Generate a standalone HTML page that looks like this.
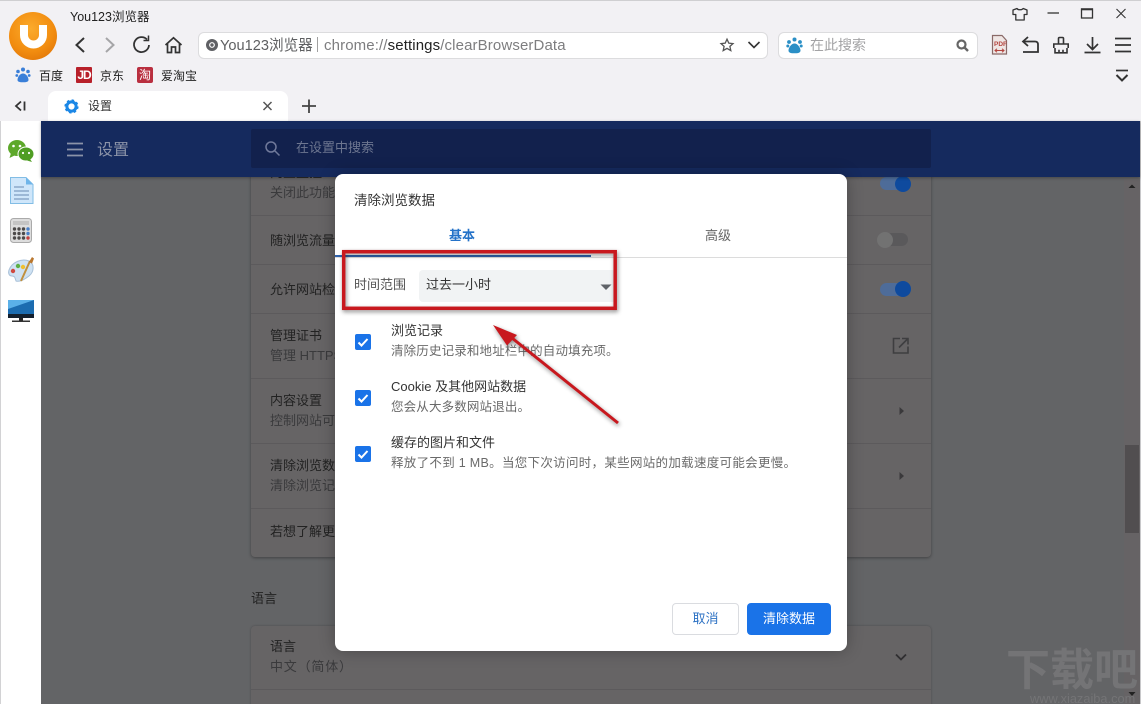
<!DOCTYPE html>
<html lang="zh"><head><meta charset="utf-8"><title>You123浏览器</title>
<style>
html,body{margin:0;padding:0;width:1141px;height:704px;overflow:hidden;background:#f2f1f4}
body{position:relative;font-family:"Liberation Sans","Noto Sans CJK SC",sans-serif;color:#222}
.a,.t{position:absolute}
.t{white-space:nowrap;line-height:16px}
svg{position:absolute;overflow:visible}
.g{color:#3a3a3c;font-size:13px}
.m{color:#222;font-size:13px}
.line{position:absolute;left:251px;width:680px;height:1px;background:#5c5a5c}
.d1{font-size:13px;color:#333}
.d2{font-size:12.5px;color:#6a6a6a}
.cb{position:absolute;left:355px;width:16px;height:16px;background:#1a73e8;border-radius:2px}
</style></head><body>
<div class="a" style="left:0;top:0;width:1141px;height:1px;background:#cfcfd1"></div>

<!-- logo -->
<div class="a" style="left:9px;top:12px;width:48px;height:48px;border-radius:50%;background:radial-gradient(circle at 45% 35%,#fbab2c 0%,#f28d10 55%,#d96b05 100%)"></div>
<svg style="left:0;top:0" width="60" height="60"><path d="M24 25v10a9.500 9.500 0 0 0 19 0V25" fill="none" stroke="#fff" stroke-width="8"/></svg>
<div class="t" style="left:70px;top:9px;font-size:12.500px;color:#222">You123浏览器</div>

<!-- nav icons -->
<svg style="left:0;top:0" width="200" height="60" fill="none" stroke-width="2">
<path d="M84 38l-7.500 7 7.500 7" stroke="#333"/>
<path d="M106 38l7.500 7-7.500 7" stroke="#a5a5a7"/>
<path d="M147 39.500a7.500 7.500 0 1 0 2 5.500" stroke="#333" stroke-width="1.800"/><path d="M148.500 35.500v5h-5" stroke="#333" stroke-width="1.500"/>
<path d="M165.500 45l8-7.200 8 7.200M167.500 43.500v9h4v-5.500h4v5.500h4v-9" stroke="#333" stroke-width="1.700"/>
</svg>

<!-- address bar -->
<div class="a" style="left:198px;top:32px;width:568px;height:25px;background:#fff;border:1px solid #dcdcde;border-radius:6px"></div>
<svg style="left:206px;top:39px" width="12" height="12"><circle cx="6" cy="6" r="6" fill="#5f6064"/><circle cx="6" cy="6" r="2.300" fill="#5f6064" stroke="#fff" stroke-width="1.200"/></svg>
<div class="t" style="left:220px;top:37px;font-size:14.600px;color:#5f6062;line-height:18px">You123浏览器</div>
<div class="a" style="left:317px;top:37px;width:1px;height:15px;background:#a0a0a0"></div>
<div class="t" style="left:324px;top:37px;font-size:15px;line-height:18px;letter-spacing:.12px;color:#7d7d7f">chrome://<span style="color:#222">settings</span>/clearBrowserData</div>
<svg style="left:0;top:0" width="780" height="60" fill="none">
<path d="M727 39.200l1.800 3.900 4.200.5-3.100 2.800.9 4.200-3.800-2.200-3.800 2.200.9-4.200-3.100-2.800 4.200-.5z" stroke="#555" stroke-width="1.300"/>
<path d="M748.500 42l5.500 5.500 5.500-5.500" stroke="#333" stroke-width="1.600"/>
</svg>

<!-- search box -->
<div class="a" style="left:778px;top:32px;width:198px;height:25px;background:#fff;border:1px solid #dcdcde;border-radius:6px"></div>
<svg style="left:786px;top:37px" width="17" height="17"><g fill="#2a8fc6"><circle cx="8.500" cy="2.500" r="2"/><circle cx="3" cy="5" r="1.900"/><circle cx="14" cy="5" r="1.900"/><circle cx="1.800" cy="9" r="1.500"/><circle cx="15.200" cy="9" r="1.500"/><path d="M8.500 6.500c3 0 6 4 6 7 0 2.500-3 2.800-6 2.800s-6-.3-6-2.800c0-3 3-7 6-7z"/></g></svg>
<div class="t" style="left:810px;top:37px;font-size:14px;color:#a3a3a5">在此搜索</div>
<svg style="left:0;top:0" width="1141" height="90" fill="none">
<circle cx="961.500" cy="44.500" r="4" stroke="#666" stroke-width="2.200"/><path d="M964.500 47.500l3.500 3.500" stroke="#666" stroke-width="2.400"/>
<!-- shirt -->
<path d="M1017 8.500c1 1.700 5 1.700 6.200 0l3.800 1.500v4.500l-2.800 0v5.500h-8.400v-5.500l-2.800 0V10z" stroke="#333" stroke-width="1.300" stroke-linejoin="round"/>
<path d="M1047.500 13h11.500" stroke="#333" stroke-width="1.300"/>
<rect x="1081.500" y="9" width="11" height="9" stroke="#333" stroke-width="1.300"/><path d="M1081 9.300h12" stroke="#333" stroke-width="2"/>
<path d="M1116.500 9l9 9M1125.500 9l-9 9" stroke="#333" stroke-width="1.100"/>
<!-- pdf -->
<path d="M992.500 35.500h9.500l4.500 5v13.500h-14z" fill="#efe6e4" stroke="#8a6a68" stroke-width="1.200"/>
<path d="M995 50.500h9M997 48.800l-2 1.700 2 1.700M1002 48.800l2 1.700-2 1.700" stroke="#b4453f" stroke-width="1"/>
<path d="M1023 41.500h12q3 0 3 3v7.500h-15" stroke="#333" stroke-width="1.800"/>
<path d="M1028 37l-5 4.500 5 4.500" stroke="#333" stroke-width="1.800"/>
<path d="M1058.500 44v-5.500q0-1 1-1h3q1 0 1 1V44M1053.800 48v-4h14.400v4M1055 48v4.800h12V48M1059 52.800v-3M1063 52.800v-3" stroke="#333" stroke-width="1.600"/>
<path d="M1092.500 37v12M1087 44l5.500 5.500 5.500-5.500M1084.500 52.500h16" stroke="#333" stroke-width="1.700"/>
<path d="M1115 38.500h16M1115 45h16M1115 51.500h16" stroke="#333" stroke-width="1.800"/>
<path d="M1116 70.500h12" stroke="#333" stroke-width="1.700"/><path d="M1116.500 75l5.500 5.500 5.500-5.500" stroke="#333" stroke-width="2"/>
</svg>
<div class="t" style="left:994px;top:41px;font-size:6.500px;line-height:7px;color:#b4453f;font-weight:bold">PDF</div>

<!-- bookmarks -->
<svg style="left:15px;top:67px" width="16" height="16"><g fill="#3a7fd8"><circle cx="8" cy="2.500" r="2"/><circle cx="3" cy="4.500" r="1.800"/><circle cx="13" cy="4.500" r="1.800"/><circle cx="1.800" cy="8.500" r="1.400"/><circle cx="14.200" cy="8.500" r="1.400"/><path d="M8 6.500c3 0 5.500 3.500 5.500 6.500 0 2-3 2.300-5.500 2.300S2.500 15 2.500 13c0-3 2.500-6.500 5.500-6.500z"/></g></svg>
<div class="t" style="left:39px;top:68px;font-size:12px">百度</div>
<div class="a" style="left:76px;top:67px;width:16px;height:16px;background:#b8202a;border-radius:1px;color:#fff;font-size:12px;font-weight:bold;line-height:16px;text-align:center;letter-spacing:-1px">JD</div>
<div class="t" style="left:100px;top:68px;font-size:12px">京东</div>
<div class="a" style="left:137px;top:67px;width:16px;height:16px;background:#b92f3f;border-radius:2px;color:#fff;font-size:12px;line-height:16px;text-align:center">淘</div>
<div class="t" style="left:161px;top:68px;font-size:12px">爱淘宝</div>

<!-- tab bar -->
<svg style="left:0;top:0" width="330" height="125" fill="none">
<path d="M21 101.500l-5 4.500 5 4.500" stroke="#333" stroke-width="1.800"/><path d="M24.500 101.500v9" stroke="#333" stroke-width="1.800"/>
</svg>
<div class="a" style="left:48px;top:91px;width:240px;height:30px;background:#fff;border-radius:8px 8px 0 0"></div>
<svg style="left:64px;top:99px" width="15" height="15"><circle cx="7.500" cy="7.500" r="4.600" fill="none" stroke="#1b87e6" stroke-width="3"/><circle cx="7.500" cy="7.500" r="6" fill="none" stroke="#1b87e6" stroke-width="2.200" stroke-dasharray="2.400 2.300"/></svg>
<div class="t" style="left:88px;top:98px;font-size:12px;color:#333">设置</div>
<svg style="left:0;top:0" width="330" height="125" fill="none">
<path d="M263.500 102l8 8M271.500 102l-8 8" stroke="#555" stroke-width="1.500"/>
<path d="M309 99.500v13.500M302 106h14" stroke="#444" stroke-width="1.800"/>
</svg>

<!-- sidebar -->
<div class="a" style="left:0;top:121px;width:41px;height:583px;background:#fff;border-left:1px solid #d2d2d4;box-sizing:border-box"></div>
<svg style="left:0;top:121px" width="41" height="210">
<ellipse cx="17" cy="27" rx="9" ry="8" fill="#5da82a"/><path d="M11 32l-1.500 5 6-3z" fill="#5da82a"/>
<circle cx="13.500" cy="25" r="1.300" fill="#fff"/><circle cx="20" cy="25" r="1.300" fill="#fff"/>
<ellipse cx="26" cy="33" rx="8" ry="7" fill="#4f9d23" stroke="#fff"/><path d="M30 38l2 3-5-1.500z" fill="#4f9d23"/>
<circle cx="23" cy="32" r="1.100" fill="#fff"/><circle cx="29" cy="32" r="1.100" fill="#fff"/>
<path d="M10.500 56.500h15.500l7 7v19H10.500z" fill="#cfe6fa" stroke="#82bde5"/><path d="M26 56.500v7h7z" fill="#6fb5ea"/>
<path d="M14 66h10M14 70h15M14 74h15M14 78h15" stroke="#7d9dc0" stroke-width="1.200"/>
<rect x="10.500" y="97.500" width="21" height="24" rx="3" fill="#ddd" stroke="#aaa"/>
<rect x="13" y="100" width="16" height="4" fill="#c4c4c4"/>
<g fill="#4c4a4a"><circle cx="14.500" cy="108" r="1.700"/><circle cx="19" cy="108" r="1.700"/><circle cx="23.500" cy="108" r="1.700"/><circle cx="14.500" cy="112.500" r="1.700"/><circle cx="19" cy="112.500" r="1.700"/><circle cx="23.500" cy="112.500" r="1.700"/><circle cx="14.500" cy="117" r="1.700"/><circle cx="19" cy="117" r="1.700"/><circle cx="23.500" cy="117" r="1.700"/></g>
<circle cx="28" cy="108" r="1.700" fill="#4a80c8"/><circle cx="28" cy="112.500" r="1.700" fill="#4a80c8"/><circle cx="28" cy="117" r="1.700" fill="#c43f3f"/>
<path d="M9 149c3-8 13-12 20-9 6 3 5 11 0 15-5 4-10 6-13 5-1-3-1-5-4-5s-4-3-3-6z" fill="#cfe2f3" stroke="#a8c0d8"/>
<circle cx="13" cy="150" r="2.200" fill="#d04a40"/><circle cx="18" cy="145" r="2.200" fill="#5cb045"/><circle cx="23" cy="146" r="2.200" fill="#f0c030"/>
<path d="M21 160l9-20" stroke="#c09040" stroke-width="2"/><path d="M29 141l3-5 2 1.500-2 5z" fill="#b9772f"/>
<path d="M8 179h26v15H8z" fill="#1c6cb0"/><path d="M8 179h26l-26 9z" fill="#5bb0e8"/><rect x="8" y="193" width="26" height="4" fill="#14202e"/>
<rect x="19" y="197" width="4" height="2.500" fill="#222"/><rect x="12" y="199.500" width="18" height="1.500" fill="#333"/>
</svg>

<!-- page -->
<div class="a" style="left:41px;top:121px;width:1100px;height:583px;background:#636466"></div>
<div class="a" style="left:1124px;top:178px;width:16px;height:526px;background:#666365"></div>
<div class="a" style="left:1125px;top:445px;width:14px;height:88px;background:#514e50"></div>
<div class="a" style="left:1140px;top:121px;width:1px;height:583px;background:#c8c8ca"></div>
<svg style="left:1125px;top:180px" width="14" height="524"><path d="M3.500 8l3.500-3.500L10.500 8z" fill="#222"/><path d="M3.500 512h7L7 516z" fill="#222"/></svg>

<!-- cards -->
<div class="a" style="left:251px;top:170px;width:680px;height:387px;background:#666465;border-radius:0 0 4px 4px;box-shadow:0 1px 3px rgba(0,0,0,.35)"></div>
<div class="a" style="left:251px;top:626px;width:680px;height:90px;background:#666465;border-radius:4px;box-shadow:0 0 2px rgba(0,0,0,.25)"></div>
<div class="line" style="top:215px"></div><div class="line" style="top:264px"></div><div class="line" style="top:313px"></div><div class="line" style="top:378px"></div><div class="line" style="top:443px"></div><div class="line" style="top:508px"></div><div class="line" style="top:689px"></div>
<div class="t m" style="left:270px;top:165px">内置监控</div>
<div class="t g" style="left:270px;top:185px">关闭此功能</div>
<div class="t m" style="left:270px;top:233px">随浏览流量</div>
<div class="t m" style="left:270px;top:282px">允许网站检</div>
<div class="t m" style="left:270px;top:328px">管理证书</div>
<div class="t g" style="left:270px;top:348px">管理 HTTPS</div>
<div class="t m" style="left:270px;top:393px">内容设置</div>
<div class="t g" style="left:270px;top:413px">控制网站可</div>
<div class="t m" style="left:270px;top:458px">清除浏览数</div>
<div class="t g" style="left:270px;top:478px">清除浏览记</div>
<div class="t m" style="left:270px;top:524px">若想了解更</div>
<div class="t m" style="left:251px;top:591px">语言</div>
<div class="t m" style="left:270px;top:639px">语言</div>
<div class="t g" style="left:270px;top:659px;letter-spacing:.8px">中文（简体）</div>

<!-- toggles -->
<div class="a" style="left:880px;top:177px;width:24px;height:13px;border-radius:7px;background:#4e6c99"></div>
<div class="a" style="left:895px;top:176px;width:16px;height:16px;border-radius:50%;background:#0e4a9e"></div>
<div class="a" style="left:885px;top:233px;width:23px;height:13px;border-radius:7px;background:#5a595b"></div>
<div class="a" style="left:877px;top:232px;width:16px;height:16px;border-radius:50%;background:#727272"></div>
<div class="a" style="left:880px;top:283px;width:24px;height:13px;border-radius:7px;background:#4e6c99"></div>
<div class="a" style="left:895px;top:281px;width:16px;height:16px;border-radius:50%;background:#0e4a9e"></div>
<svg style="left:890px;top:335px" width="22" height="150" fill="none">
<path d="M10 3.500H3.500V18H18V11.500M12 3.500h6v6M18 3.500l-9 9" stroke="#3e3e40" stroke-width="1.600"/>
<path d="M9.500 72l4.500 4-4.500 4z" fill="#3a393b"/><path d="M9.500 137l4.500 4-4.500 4z" fill="#3a393b"/>
</svg>
<svg style="left:890px;top:650px" width="22" height="14" fill="none"><path d="M6 4.500l5 5 5-5" stroke="#302f31" stroke-width="1.800"/></svg>

<!-- header -->
<div class="a" style="left:41px;top:121px;width:1099px;height:56px;background:#152a5e;box-shadow:0 1px 3px rgba(0,0,0,.3)"></div>
<div class="a" style="left:251px;top:129px;width:680px;height:39px;background:#12214d;border-radius:2px"></div>
<svg style="left:60px;top:135px" width="230" height="30" fill="none">
<path d="M7 8.500h16M7 14.500h16M7 20.500h16" stroke="#8b93a8" stroke-width="1.800"/>
<circle cx="211" cy="12" r="5" stroke="#70799a" stroke-width="1.500"/><path d="M215 16l4.500 4.500" stroke="#70799a" stroke-width="1.500"/>
</svg>
<div class="t" style="left:97px;top:142px;font-size:16px;line-height:18px;color:#8b93a8">设置</div>
<div class="t" style="left:296px;top:140px;font-size:13px;color:#6d7690">在设置中搜索</div>

<!-- dialog -->
<div class="a" style="left:335px;top:174px;width:512px;height:477px;background:#fff;border-radius:8px;box-shadow:0 0 16px rgba(0,0,0,.28)"></div>
<div class="t" style="left:354px;top:193px;font-size:13.500px;color:#333">清除浏览数据</div>
<div class="t" style="left:449px;top:228px;font-size:13px;font-weight:bold;color:#2472c8">基本</div>
<div class="t" style="left:705px;top:228px;font-size:13px;color:#666">高级</div>
<div class="a" style="left:335px;top:257px;width:512px;height:1px;background:#dcdcdc"></div>
<div class="a" style="left:335px;top:255px;width:256px;height:2px;background:#2e62ae"></div>
<div class="t" style="left:354px;top:277px;font-size:13px;color:#555">时间范围</div>
<div class="a" style="left:419px;top:270px;width:197px;height:32px;background:#f1f3f4;border-radius:4px"></div>
<div class="t" style="left:426px;top:277px;font-size:13px;color:#333">过去一小时</div>
<svg style="left:600px;top:284px" width="12" height="7"><path d="M0.500 0.500h11L6 6z" fill="#5f6368"/></svg>

<div class="cb" style="top:334px"></div><div class="cb" style="top:390px"></div><div class="cb" style="top:446px"></div>
<svg style="left:355px;top:334px" width="16" height="128" fill="none" stroke="#fff" stroke-width="2"><path d="M3.500 8.500l3 3 6-6.500M3.500 64.500l3 3 6-6.500M3.500 120.500l3 3 6-6.500"/></svg>
<div class="t d1" style="left:391px;top:323px">浏览记录</div>
<div class="t d2" style="left:391px;top:343px;letter-spacing:.15px">清除历史记录和地址栏中的自动填充项。</div>
<div class="t d1" style="left:391px;top:379px">Cookie 及其他网站数据</div>
<div class="t d2" style="left:391px;top:399px;letter-spacing:.15px">您会从大多数网站退出。</div>
<div class="t d1" style="left:391px;top:435px">缓存的图片和文件</div>
<div class="t d2" style="left:391px;top:455px;letter-spacing:.3px">释放了不到 1 MB。当您下次访问时，某些网站的加载速度可能会更慢。</div>

<div class="a" style="left:672px;top:603px;width:65px;height:30px;background:#fff;border:1px solid #dadce0;border-radius:4px;color:#2d72c4;font-size:13px;line-height:30px;text-align:center">取消</div>
<div class="a" style="left:747px;top:603px;width:84px;height:32px;background:#1a73e8;border-radius:4px;color:#fff;font-size:13px;line-height:31px;text-align:center">清除数据</div>

<!-- annotations -->
<svg style="left:0;top:0;filter:drop-shadow(1px 2px 2px rgba(0,0,0,.45))" width="1141" height="704" fill="none">
<rect x="343.700" y="251.700" width="271.500" height="56.600" stroke="#c8181e" stroke-width="3.500"/>
<path d="M618 423L512 338" stroke="#c8181e" stroke-width="3"/>
<path d="M493 325l24 10-10 10.500z" fill="#c8181e"/>
</svg>

<!-- watermark -->
<div class="t" style="left:1006px;top:646px;font-size:44px;line-height:50px;color:#747476;font-weight:bold">下载吧</div>
<div class="t" style="left:1030px;top:692px;font-size:12.800px;line-height:13px;color:#747476">www.xiazaiba.com</div>
</body></html>
